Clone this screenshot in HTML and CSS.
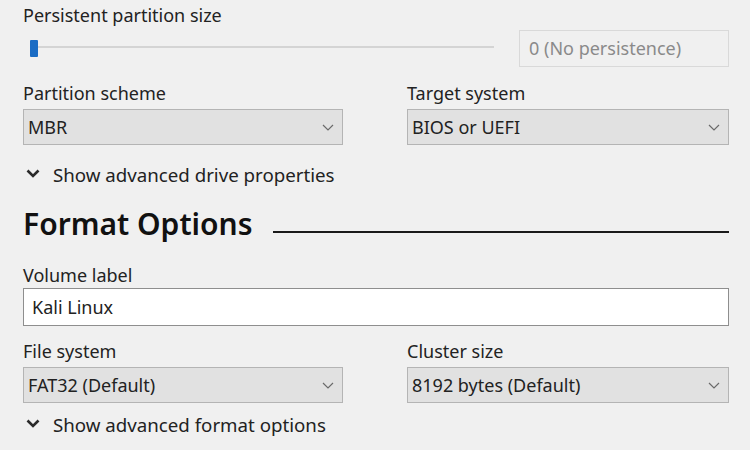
FILE: index.html
```html
<!DOCTYPE html>
<html lang="en">
<head>
<meta charset="utf-8">
<title>Drive Properties</title>
<link rel="stylesheet" href="styles.css">
</head>
<body>
<main class="panel">
  <div class="label first">Persistent partition size</div>
  <div class="persist-row">
    <div class="slider">
      <div class="track"></div>
      <div class="thumb"></div>
    </div>
    <div class="persist-box">0 (No persistence)</div>
  </div>

  <div class="grid grid-drive">
    <div class="field">
      <div class="label">Partition scheme</div>
      <div class="select"><span>MBR</span><svg class="caret" viewBox="0 0 12 7" width="12" height="7"><path d="M1 1l5 5 5-5"/></svg></div>
    </div>
    <div class="field">
      <div class="label">Target system</div>
      <div class="select"><span>BIOS or UEFI</span><svg class="caret" viewBox="0 0 12 7" width="12" height="7"><path d="M1 1l5 5 5-5"/></svg></div>
    </div>
  </div>

  <div class="toggle toggle-drive">
    <svg class="chev" viewBox="0 0 14 9" width="14" height="9"><path d="M1.5 1.5l5.5 5.5 5.5-5.5"/></svg>
    <span>Show advanced drive properties</span>
  </div>

  <div class="heading">
    <h2>Format Options</h2>
    <div class="rule"></div>
  </div>

  <div class="label vol-label">Volume label</div>
  <div class="textbox">Kali Linux</div>

  <div class="grid grid-format">
    <div class="field">
      <div class="label">File system</div>
      <div class="select"><span>FAT32 (Default)</span><svg class="caret" viewBox="0 0 12 7" width="12" height="7"><path d="M1 1l5 5 5-5"/></svg></div>
    </div>
    <div class="field">
      <div class="label">Cluster size</div>
      <div class="select"><span>8192 bytes (Default)</span><svg class="caret" viewBox="0 0 12 7" width="12" height="7"><path d="M1 1l5 5 5-5"/></svg></div>
    </div>
  </div>

  <div class="toggle toggle-format">
    <svg class="chev" viewBox="0 0 14 9" width="14" height="9"><path d="M1.5 1.5l5.5 5.5 5.5-5.5"/></svg>
    <span>Show advanced format options</span>
  </div>
</main>
</body>
</html>
```

FILE: styles.css
```css
html, body {
  margin: 0;
  padding: 0;
  background: #f0f0f0;
}

body {
  width: 750px;
  height: 450px;
  overflow: hidden;
  font-family: "Noto Sans", "Open Sans", sans-serif;
  font-size: 18px;
  color: #222;
}

.panel {
  padding: 4px 21px 0 23px;
}

.label {
  line-height: 22px;
  height: 22px;
  white-space: nowrap;
}

.persist-row {
  display: flex;
  align-items: flex-start;
  margin-top: 4px;
}

.slider {
  position: relative;
  width: 464px;
  height: 37px;
  margin-left: 7px;
}

.track {
  position: absolute;
  left: 6px;
  right: 0;
  top: 16px;
  height: 2px;
  background: #d4d4d4;
}

.thumb {
  position: absolute;
  left: 0;
  top: 10px;
  width: 8px;
  height: 17px;
  background: #1a6cc4;
  border-radius: 1px;
}

.persist-box {
  margin-left: auto;
  width: 208px;
  height: 35px;
  border: 1px solid #d9d9d9;
  line-height: 35px;
  text-indent: 9px;
  color: #8a8a8a;
  white-space: nowrap;
}

.grid {
  display: grid;
  grid-template-columns: 320px 1fr;
  column-gap: 64px;
}

.grid-drive {
  margin-top: 15px;
}

.grid-format {
  margin-top: 14px;
}

.select {
  margin-top: 5px;
  height: 34px;
  border: 1px solid #b4b4b4;
  background: #e1e1e1;
  display: flex;
  align-items: center;
  justify-content: space-between;
  padding: 0 8px 0 4px;
  white-space: nowrap;
}

.caret {
  fill: none;
  stroke: #6a6a6a;
  stroke-width: 1.2;
}

.toggle {
  display: flex;
  align-items: center;
  font-size: 18.7px;
  line-height: 22px;
  height: 22px;
  white-space: nowrap;
}

.toggle-drive {
  margin-top: 19px;
}

.toggle-format {
  margin-top: 11px;
}

.chev {
  margin-left: 3px;
  margin-right: 13px;
  margin-top: -3px;
  fill: none;
  stroke: #2a2a2a;
  stroke-width: 2.6;
}

.heading {
  display: flex;
  align-items: center;
  margin-top: 20px;
  height: 36px;
}

.heading h2 {
  margin: 0;
  font-size: 30px;
  font-weight: 600;
  line-height: 36px;
  color: #111;
  white-space: nowrap;
}

.rule {
  flex: 1;
  height: 2px;
  background: #1a1a1a;
  margin-left: 20px;
  margin-top: 15px;
}

.vol-label {
  margin-top: 22px;
}

.textbox {
  margin-top: 2px;
  height: 36px;
  border: 1px solid #8e8e8e;
  background: #fff;
  line-height: 36px;
  padding-left: 8px;
  white-space: nowrap;
}
```
